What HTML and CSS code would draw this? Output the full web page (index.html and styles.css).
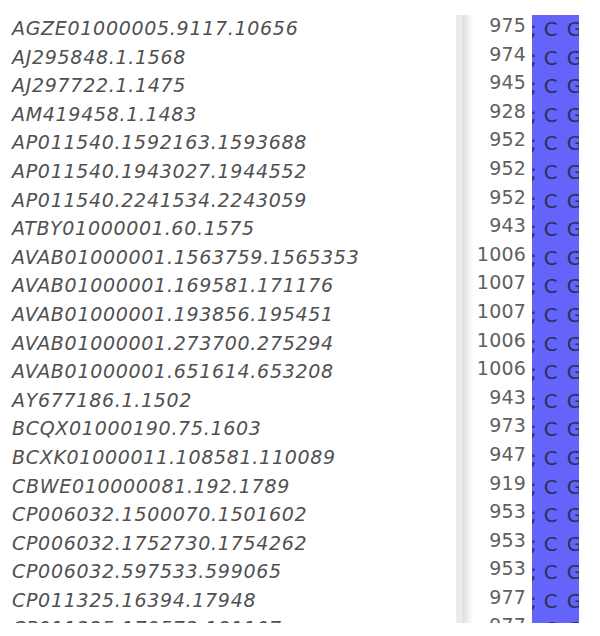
FILE: index.html
```html
<!DOCTYPE html>
<html>
<head>
<meta charset="utf-8">
<link rel="stylesheet" href="styles.css">
</head>
<body>
<div class="view">
  <ul class="names">
    <li>AGZE01000005.9117.10656</li>
    <li>AJ295848.1.1568</li>
    <li>AJ297722.1.1475</li>
    <li>AM419458.1.1483</li>
    <li>AP011540.1592163.1593688</li>
    <li>AP011540.1943027.1944552</li>
    <li>AP011540.2241534.2243059</li>
    <li>ATBY01000001.60.1575</li>
    <li>AVAB01000001.1563759.1565353</li>
    <li>AVAB01000001.169581.171176</li>
    <li>AVAB01000001.193856.195451</li>
    <li>AVAB01000001.273700.275294</li>
    <li>AVAB01000001.651614.653208</li>
    <li>AY677186.1.1502</li>
    <li>BCQX01000190.75.1603</li>
    <li>BCXK01000011.108581.110089</li>
    <li>CBWE010000081.192.1789</li>
    <li>CP006032.1500070.1501602</li>
    <li>CP006032.1752730.1754262</li>
    <li>CP006032.597533.599065</li>
    <li>CP011325.16394.17948</li>
    <li>CP011325.179573.181107</li>
  </ul>
  <ol class="lengths">
    <li>975</li>
    <li>974</li>
    <li>945</li>
    <li>928</li>
    <li>952</li>
    <li>952</li>
    <li>952</li>
    <li>943</li>
    <li>1006</li>
    <li>1007</li>
    <li>1007</li>
    <li>1006</li>
    <li>1006</li>
    <li>943</li>
    <li>973</li>
    <li>947</li>
    <li>919</li>
    <li>953</li>
    <li>953</li>
    <li>953</li>
    <li>977</li>
    <li>977</li>
  </ol>
  <div class="seqs">
    <div class="seq"><span class="semi">;</span><span>C</span><span>G</span></div>
    <div class="seq"><span class="semi">;</span><span>C</span><span>G</span></div>
    <div class="seq"><span class="semi">;</span><span>C</span><span>G</span></div>
    <div class="seq"><span class="semi">;</span><span>C</span><span>G</span></div>
    <div class="seq"><span class="semi">;</span><span>C</span><span>G</span></div>
    <div class="seq"><span class="semi">;</span><span>C</span><span>G</span></div>
    <div class="seq"><span class="semi">;</span><span>C</span><span>G</span></div>
    <div class="seq"><span class="semi">;</span><span>C</span><span>G</span></div>
    <div class="seq"><span class="semi">;</span><span>C</span><span>G</span></div>
    <div class="seq"><span class="semi">;</span><span>C</span><span>G</span></div>
    <div class="seq"><span class="semi">;</span><span>C</span><span>G</span></div>
    <div class="seq"><span class="semi">;</span><span>C</span><span>G</span></div>
    <div class="seq"><span class="semi">;</span><span>C</span><span>G</span></div>
    <div class="seq"><span class="semi">;</span><span>C</span><span>G</span></div>
    <div class="seq"><span class="semi">;</span><span>C</span><span>G</span></div>
    <div class="seq"><span class="semi">;</span><span>C</span><span>G</span></div>
    <div class="seq"><span class="semi">;</span><span>C</span><span>G</span></div>
    <div class="seq"><span class="semi">;</span><span>C</span><span>G</span></div>
    <div class="seq"><span class="semi">;</span><span>C</span><span>G</span></div>
    <div class="seq"><span class="semi">;</span><span>C</span><span>G</span></div>
    <div class="seq"><span class="semi">;</span><span>C</span><span>G</span></div>
    <div class="seq"><span class="semi">;</span><span>C</span><span>G</span></div>
  </div>
</div>
</body>
</html>
```

FILE: styles.css
```css
html, body {
  margin: 0;
  padding: 0;
  background: #ffffff;
}

body {
  font-family: "DejaVu Sans", Verdana, sans-serif;
  font-size: 19px;
}

.view {
  display: flex;
  height: 608px;
  margin-top: 15px;
  overflow: hidden;
}

.names {
  list-style: none;
  margin: -1px 0 0 0;
  padding: 0 0 0 12px;
  width: 444px;
  flex: none;
  font-style: italic;
  color: #505050;
  letter-spacing: 0.7px;
}

.names li {
  height: 28.6px;
  line-height: 28.6px;
  white-space: nowrap;
}

.lengths {
  list-style: none;
  margin: 0;
  padding: 0 6px 0 0;
  width: 70px;
  flex: none;
  text-align: right;
  color: #606060;
  letter-spacing: 0.2px;
  background: linear-gradient(to right, #ebebeb 0, #ebebeb 6px, #dedede 7px, #f4f4f4 13px, #ffffff 18px, #ffffff 100%);
}

.lengths li {
  height: 28.6px;
  line-height: 20px;
}

.seqs {
  width: 47px;
  flex: none;
  background: #6464fa;
  color: #2e2e5c;
  font-size: 20px;
  overflow: hidden;
}

.seq {
  display: flex;
  height: 28.6px;
  line-height: 28.6px;
  white-space: nowrap;
}

.seq span {
  flex: none;
  margin-left: 9px;
}

.seq .semi {
  margin-left: -2px;
}

.seq span:nth-child(2) {
  margin-left: 7px;
}
```
